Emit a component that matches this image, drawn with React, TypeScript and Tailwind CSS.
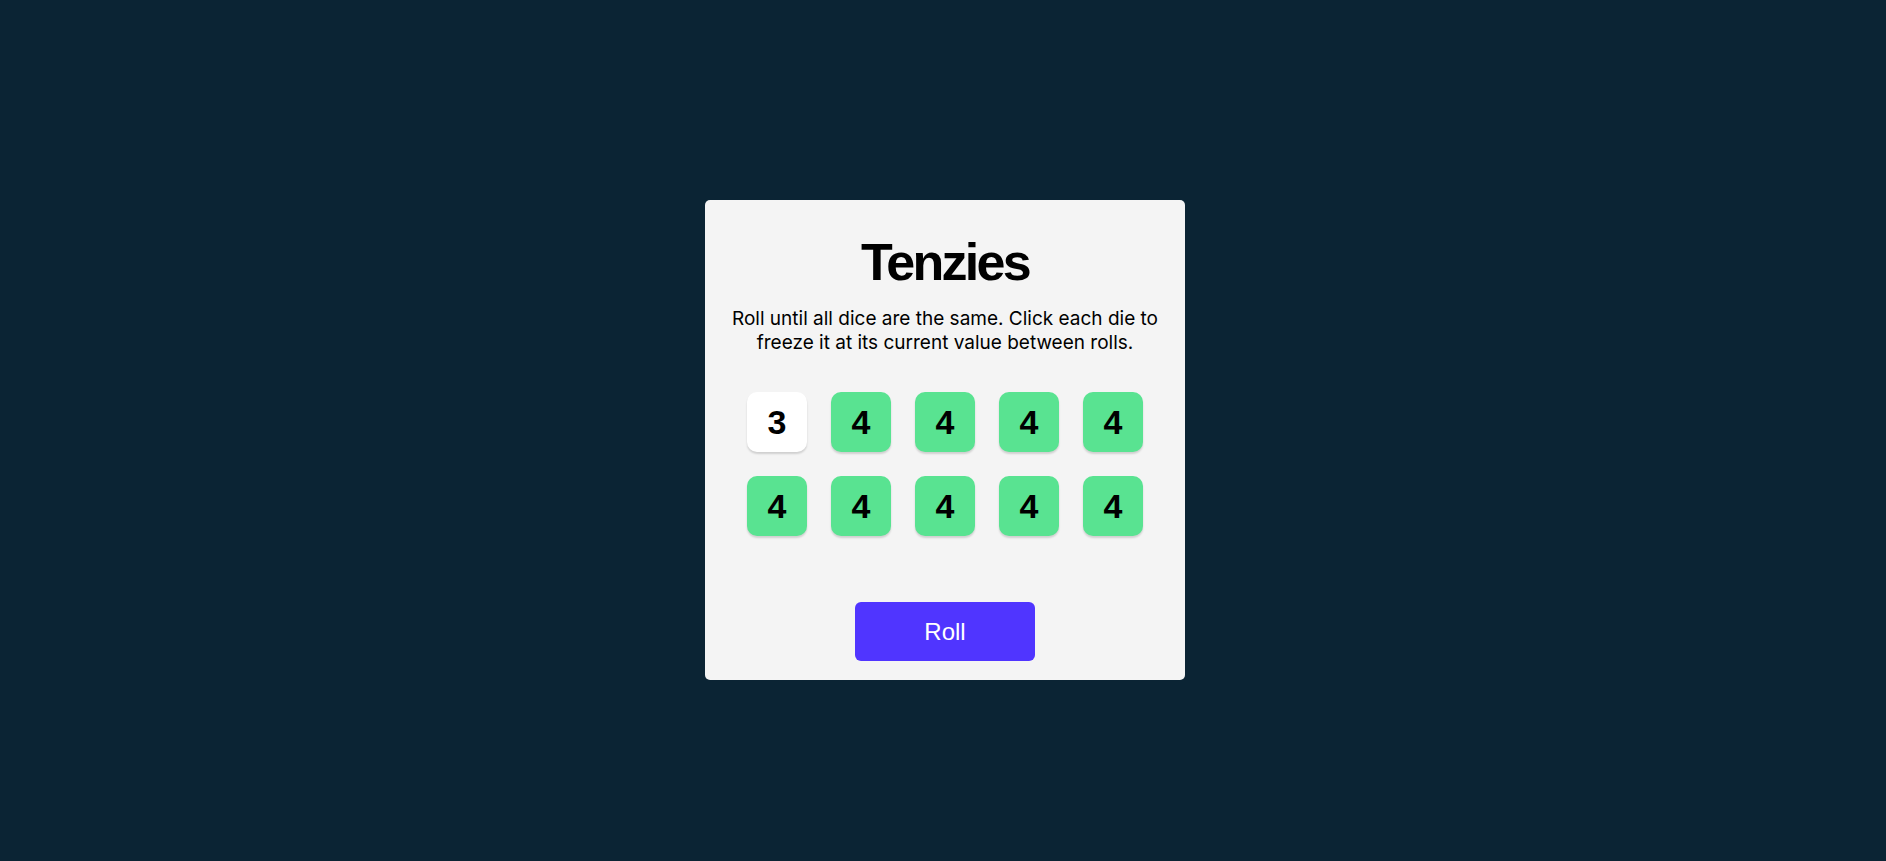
import { useState } from 'react';

const initialDice = [
  { value: 3, held: false },
  { value: 4, held: true },
  { value: 4, held: true },
  { value: 4, held: true },
  { value: 4, held: true },
  { value: 4, held: true },
  { value: 4, held: true },
  { value: 4, held: true },
  { value: 4, held: true },
  { value: 4, held: true },
];

export default function App() {
  const [dice, setDice] = useState(initialDice);

  const toggle = (i: number) => {
    setDice(d => d.map((die, idx) => (idx === i ? { ...die, held: !die.held } : die)));
  };

  const roll = () => {
    setDice(d => d.map(die => (die.held ? die : { ...die, value: Math.ceil(Math.random() * 6) })));
  };

  return (
    <div className="flex h-screen w-full items-center justify-center bg-[#0B2434] pt-[19px] pl-[4px]">
      <main className="flex h-[480px] w-[480px] flex-col items-center rounded-[5px] bg-[#F4F4F4] pt-[36px]">
        <h1 className="font-['Liberation_Sans',Arial,sans-serif] text-[52px] font-bold leading-none tracking-[-2.7px] text-black">
          Tenzies
        </h1>
        <p className="mt-[19px] w-[440px] text-center font-['Inter',sans-serif] text-[19px] leading-[24px] text-black">
          Roll until all dice are the same. Click each die to freeze it at its current value between rolls.
        </p>
        <div className="mt-[37px] grid grid-cols-5 gap-[24px]">
          {dice.map((die, i) => (
            <button
              key={i}
              onClick={() => toggle(i)}
              className={`flex h-[60px] w-[60px] items-center justify-center rounded-[10px] font-['Liberation_Sans',Arial,sans-serif] text-[34px] font-bold text-black shadow-[0_2px_2px_rgba(0,0,0,0.15)] ${
                die.held ? 'bg-[#59E391]' : 'bg-white'
              }`}
            >
              {die.value}
            </button>
          ))}
        </div>
        <button
          onClick={roll}
          className="mt-[66px] h-[59px] w-[180px] rounded-[6px] bg-[#5035FF] font-['Liberation_Sans',Arial,sans-serif] text-[24px] text-white"
        >
          Roll
        </button>
      </main>
    </div>
  );
}
